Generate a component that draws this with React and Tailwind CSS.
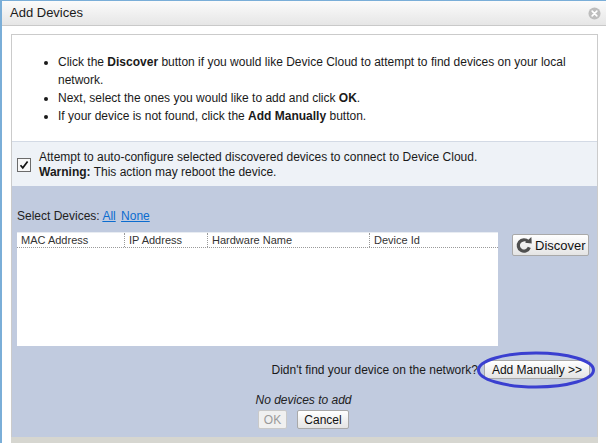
import React from 'react';

const RefreshIcon = () => (
  <svg width="18" height="18" viewBox="0 0 20 20" className="shrink-0">
    <path d="M14.6 6.2A6.3 6.3 0 1 0 15.9 12.6" fill="none" stroke="#4f4f4f" strokeWidth="3.6" />
    <polygon points="11.2,7.6 18.6,8.4 18.2,1.2" fill="#4f4f4f" />
  </svg>
);

const CloseIcon = () => (
  <svg width="13" height="13" viewBox="0 0 14 14">
    <circle cx="7" cy="7" r="6.5" fill="#bdbdbd" />
    <path d="M4.5 4.5l5 5M9.5 4.5l-5 5" stroke="#fff" strokeWidth="1.8" strokeLinecap="round" />
  </svg>
);

const btn =
  'border border-[#a9a9a9] rounded-[2px] bg-gradient-to-b from-[#ffffff] to-[#e4e4e4] text-[#111] leading-none flex items-center';

const App = () => {
  const columns = [
    { label: 'MAC Address', w: 'w-[108px]' },
    { label: 'IP Address', w: 'w-[83px]' },
    { label: 'Hardware Name', w: 'w-[162px]' },
    { label: 'Device Id', w: 'flex-1' },
  ];

  return (
    <div className="w-[606px] h-[443px] bg-white border-t border-l-2 border-[#7aaed8] flex flex-col overflow-hidden font-['Liberation_Sans',Arial,sans-serif] text-[12px] text-[#222]">
      {/* title bar */}
      <div className="h-[25px] shrink-0 flex items-center justify-between pl-2 pr-[5px] bg-gradient-to-b from-[#fbfbfb] to-[#e6e6e6] border-b border-[#c9c9c9]">
        <span className="text-[13px] text-[#1a1a1a]">Add Devices</span>
        <CloseIcon />
      </div>

      <div className="flex-1 flex flex-col pl-[9px] pr-2 pt-[8px]">
        <div className="flex-1 flex flex-col border border-[#cbcbcb] border-b-0">
          {/* instructions */}
          <div className="h-[106px] shrink-0 bg-white pt-[18px] pl-[46px] pr-[24px]">
            <ul className="list-disc leading-[18px] text-[#1a1a1a]">
              <li>
                Click the <b>Discover</b> button if you would like Device Cloud to attempt to find devices on your local network.
              </li>
              <li>
                Next, select the ones you would like to add and click <b>OK</b>.
              </li>
              <li>
                If your device is not found, click the <b>Add Manually</b> button.
              </li>
            </ul>
          </div>

          {/* auto-configure */}
          <div className="h-[45px] shrink-0 bg-[#eef2f7] border-t border-[#d3dae5] flex items-center pl-[5px] pt-[2px]">
            <div className="w-[14px] h-[14px] border border-[#6b6b6b] bg-[#f7f7f7] flex items-center justify-center">
              <svg width="10" height="10" viewBox="0 0 10 10">
                <path d="M1.5 5.2l2.3 2.6L8.6 1.6" fill="none" stroke="#111" strokeWidth="1.7" />
              </svg>
            </div>
            <div className="ml-[8px] leading-[15px] text-[#1a1a1a]">
              <div>Attempt to auto-configure selected discovered devices to connect to Device Cloud.</div>
              <div>
                <b>Warning:</b> This action may reboot the device.
              </div>
            </div>
          </div>

          {/* device selection */}
          <div className="flex-1 bg-[#c1cbdf] flex flex-col pl-[5px] pr-[7px] pt-[23px]">
            <div className="leading-[14px]">
              Select Devices:{' '}
              <span className="text-[#0b6ccf] underline">All</span>{' '}
              <span className="text-[#0b6ccf] underline ml-[2px]">None</span>
            </div>

            <div className="flex mt-[9px]">
              <div className="w-[481px] h-[114px] bg-white border-t border-[#e8ecf2]">
                <div className="flex h-[15px] border-b border-dotted border-[#9a9a9a] text-[11px] text-[#333]">
                  {columns.map((c, i) => (
                    <div
                      key={c.label}
                      className={`${c.w} pl-[4px] leading-[14px] ${i < 3 ? 'border-r border-dotted border-[#9a9a9a]' : ''}`}
                    >
                      {c.label}
                    </div>
                  ))}
                </div>
              </div>
              <button className={`${btn} ml-[14px] mt-[2px] h-[22px] w-[77px] pl-[2px] gap-[2px] text-[13px]`}>
                <RefreshIcon />
                Discover
              </button>
            </div>

            <div className="flex items-center justify-end mt-[14px]">
              <span className="text-[12px] text-[#1a1a1a]">Didn't find your device on the network?</span>
              <div className="relative ml-[6px]">
                <button className={`${btn} h-[19px] px-[7px] text-[12px]`}>Add Manually &gt;&gt;</button>
                <svg className="absolute left-[-8px] top-[-9px] pointer-events-none" width="120" height="38" viewBox="0 0 120 38">
                  <ellipse cx="60" cy="19" rx="57.5" ry="17" fill="none" stroke="#3a3fd0" strokeWidth="3" />
                </svg>
              </div>
            </div>

            <div className="text-center italic mt-[14px] leading-[14px] text-[#222]">No devices to add</div>
            <div className="flex justify-center gap-[10px] mt-[3px]">
              <button className="h-[19px] w-[29px] border border-[#c9c9c9] rounded-[2px] bg-[#f0f0f0] text-[#9a9a9a] text-[12px] leading-none">
                OK
              </button>
              <button className={`${btn} h-[19px] w-[52px] justify-center text-[12px]`}>Cancel</button>
            </div>
          </div>
        </div>
        <div className="h-[6px] shrink-0 bg-[#d6d6d0]" />
      </div>
    </div>
  );
};

export default App;
